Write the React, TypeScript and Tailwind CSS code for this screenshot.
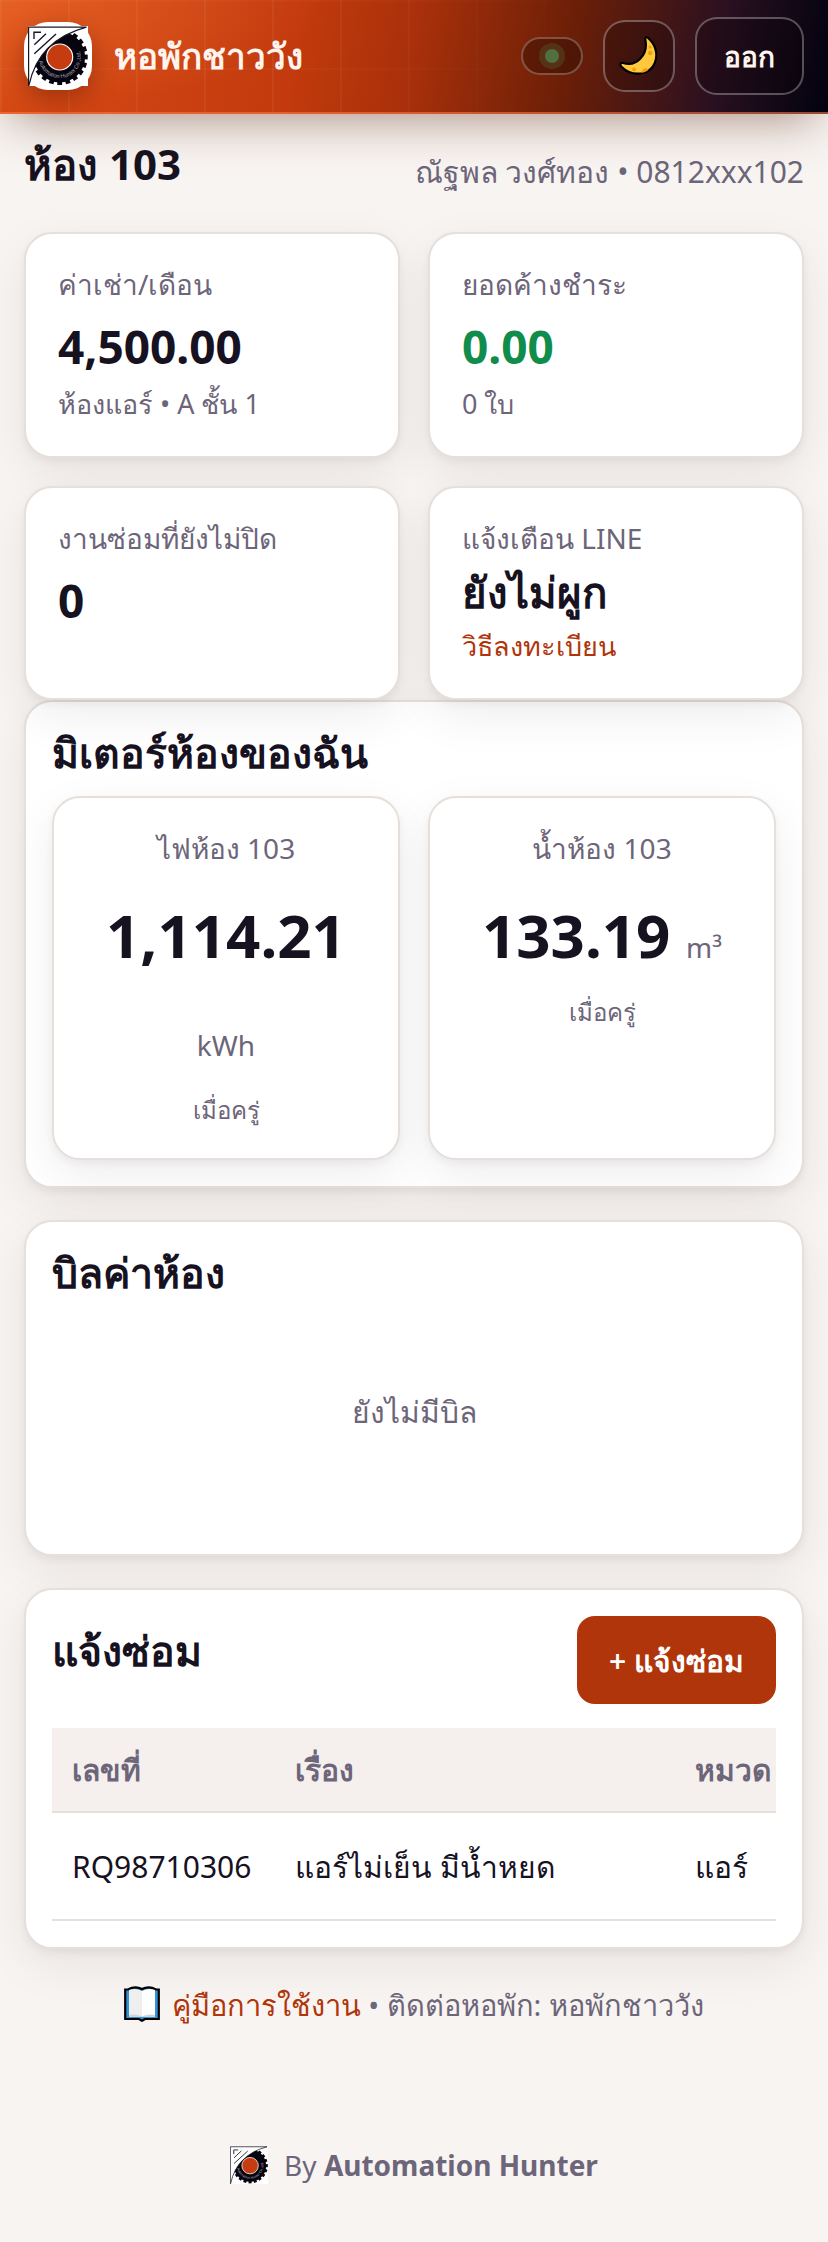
import React from "react";

const stats = [
  { label: "ค่าเช่า/เดือน", value: "4,500.00", note: "ห้องแอร์ • A ชั้น 1" },
  { label: "ยอดค้างชำระ", value: "0.00", note: "0 ใบ", positive: true },
  { label: "งานซ่อมที่ยังไม่ปิด", value: "0" },
];

const meters = [
  { label: "ไฟห้อง 103", value: "1,114.21", unit: "kWh", time: "เมื่อครู่" },
  { label: "น้ำห้อง 103", value: "133.19", unit: "m³", time: "เมื่อครู่" },
];

const tickets = [{ id: "RQ98710306", title: "แอร์ไม่เย็น มีน้ำหยด", category: "แอร์" }];

const teeth = Array.from({ length: 20 }, (_, i) => i * 18);

const cardClass =
  "rounded-[28px] border-2 border-[#e6dfda] bg-white shadow-[0_4px_8px_rgba(23,18,31,0.05),0_16px_48px_rgba(23,18,31,0.07)]";

function Logo({ id, className }: { id: string; className: string }) {
  return (
    <svg viewBox="0 0 60 60" className={className} aria-hidden="true">
      <defs>
        <clipPath id={`${id}-gear`}>
          <path d="M58 1.3Q10.5 14 1 59.3V60H60V0Z" />
        </clipPath>
        <path id={`${id}-ring`} d="M10.7 31A21 21 0 0 0 52.7 31A21 21 0 0 0 31.7 10" />
      </defs>
      <rect width="60" height="60" fill="#fff" />
      <g clipPath={`url(#${id}-gear)`} fill="#06040f">
        <circle cx="31.7" cy="31" r="25.4" />
        {teeth.map((angle) => (
          <rect key={angle} x="29.3" y="3" width="4.8" height="6" transform={`rotate(${angle} 31.7 31)`} />
        ))}
      </g>
      <circle cx="31.7" cy="31" r="13" fill="#c43c0f" stroke="#fff" strokeWidth="1.2" />
      <text fill="#a9a6b3" fontSize="5.6" fontFamily="Liberation Sans, sans-serif">
        <textPath href={`#${id}-ring`} startOffset="4">
          Automation Hunter Co.,Ltd.
        </textPath>
      </text>
      <g fill="none" stroke="#1a1826" strokeWidth="1.2">
        <path d="M.6 60V1.2H58.5Q10.5 14 1 59.3" />
        <path d="M6 13V6.2H13M6.3 18.7L18 7.7M6.3 27.7L28 8" strokeWidth="1.4" />
      </g>
    </svg>
  );
}

function MoonIcon() {
  return (
    <svg viewBox="0 0 40 40" className="size-10" aria-hidden="true">
      <path
        d="M28.8 1.6C36.5 8 39.4 18.5 35.7 27.2C31 38.7 13.5 42 2.2 30.5C.2 28 2 26.3 4.2 27C17.5 31.3 29.5 18.5 26.3 4C26 1.3 27.5 .6 28.8 1.6Z"
        fill="#ffc83d"
        stroke="#000"
        strokeWidth="2.2"
      />
      <g fill="#f0a00c">
        <circle cx="31.2" cy="17" r="2.3" />
        <circle cx="31" cy="11" r="1.5" />
        <circle cx="15" cy="33.5" r="2" />
        <path d="M22.3 37C23 31.5 28 31 29.5 34Q26 36.5 22.3 37Z" />
      </g>
    </svg>
  );
}

function BookIcon() {
  return (
    <svg viewBox="0 0 36 36" className="mr-1 inline-block size-9 align-[-6px]" aria-hidden="true">
      <path d="M1.2 3.5H4Q11-.5 18 3Q25-.5 32 3.5H34.8V33H21L18 34.8L15 33H1.2Z" fill="#3391d6" stroke="#000" strokeWidth="2.2" />
      <path d="M5 4Q12 1.5 18 5V31Q12 28 5 30Z" fill="#efefef" />
      <path d="M31 4Q24 1.5 18 5V31Q24 28 31 30Z" fill="#fff" />
      <path d="M5 29Q12 27.5 18 30.5Q24 27.5 31 29V31H5Z" fill="#d5d5d5" />
    </svg>
  );
}

function Header() {
  return (
    <header className="relative z-20 flex items-center gap-[22px] border-b-2 border-[#ff7846]/60 bg-[radial-gradient(ellipse_320px_110px_at_0%_0%,rgba(255,130,60,0.4),transparent),linear-gradient(100deg,#d64a14_0%,#c93f10_26%,#c23a0d_36%,#a8300a_50%,#6c1f07_68%,#2a1020_86%,#02020f_100%)] bg-origin-border px-6 py-[17px] shadow-[0_16px_48px_-12px_rgba(90,40,20,0.5)]">
      <div className="pointer-events-none absolute inset-0 bg-[linear-gradient(to_right,rgba(255,255,255,0.05)_2px,transparent_2px),linear-gradient(to_bottom,rgba(255,255,255,0.03)_2px,transparent_2px)] bg-[size:68px_68px] [mask-image:linear-gradient(110deg,#000_0%,#000_35%,transparent_70%)]" />
      <div className="relative flex size-[68px] items-center justify-center rounded-3xl bg-white shadow-[0_8px_24px_rgba(60,10,0,0.35)]">
        <Logo id="brand" className="size-[60px]" />
      </div>
      <h1 className="relative grow text-[35px] leading-[48px] font-bold text-[#fff4ee]">หอพักชาววัง</h1>
      <div className="relative flex items-center gap-5">
        <span className="flex h-[38px] w-[62px] items-center justify-center rounded-full border-2 border-white/25 bg-black/25">
          <span className="size-3.5 rounded-full bg-[#52703f] ring-6 ring-[#52703f]/30" />
        </span>
        <button type="button" aria-label="🌙" className="flex size-[72px] items-center justify-center rounded-[22px] border-2 border-white/30 bg-black/20">
          <MoonIcon />
        </button>
        <button type="button" className="h-[78px] rounded-[22px] border-2 border-white/30 bg-black/20 px-[27px] text-[28px] font-semibold text-[#fff4ee]">
          ออก
        </button>
      </div>
    </header>
  );
}

function StatGrid() {
  return (
    <section className="relative z-10 grid grid-cols-2 gap-7">
      {stats.map((stat) => (
        <div key={stat.label} className={`${cardClass} px-8 py-7`}>
          <p className="text-[28px] leading-[44px] text-[#6d6579]">{stat.label}</p>
          <p className={`mt-1.5 text-[46px] leading-[68px] font-bold ${stat.positive ? "text-[#108c4c]" : ""}`}>{stat.value}</p>
          {stat.note && <p className="text-[27px] leading-[48px] text-[#6d6579]">{stat.note}</p>}
        </div>
      ))}
      <div className={`${cardClass} px-8 py-7`}>
        <p className="text-[28px] leading-[44px] text-[#6d6579]">แจ้งเตือน LINE</p>
        <p className="mt-1.5 text-[42px] leading-[52px] font-bold">ยังไม่ผูก</p>
        <a href="#line" className="mt-1 block text-[27px] leading-[48px] text-[#b0350a]">
          วิธีลงทะเบียน
        </a>
      </div>
    </section>
  );
}

function MeterSection() {
  return (
    <section className={`${cardClass} p-[26px]`}>
      <h2 className="text-[41px] leading-[48px] font-bold">มิเตอร์ห้องของฉัน</h2>
      <div className="mt-5 grid grid-cols-2 gap-7">
        {meters.map((meter) => (
          <div key={meter.label} className={`${cardClass} px-8 py-7 text-center`}>
            <p className="text-[28px] leading-[44px] text-[#6d6579]">{meter.label}</p>
            <p className="mt-4 text-[60px] leading-[98px] font-bold">
              {meter.value} <span className="text-[28px] leading-none font-normal text-[#6d6579]">{meter.unit}</span>
            </p>
            <p className="mt-2 text-[24px] leading-[40px] text-[#6d6579]">{meter.time}</p>
          </div>
        ))}
      </div>
    </section>
  );
}

function RepairSection() {
  return (
    <section className={`${cardClass} mt-8 p-[26px]`}>
      <div className="flex items-start justify-between">
        <h2 className="mt-2.5 text-[41px] leading-[48px] font-bold">แจ้งซ่อม</h2>
        <button type="button" className="h-[88px] rounded-[18px] bg-[#b0350a] px-8 text-[30px] font-semibold text-white">
          + แจ้งซ่อม
        </button>
      </div>
      <div className="mt-6 overflow-hidden">
        <table className="w-full min-w-[820px] table-fixed text-left text-[30px] whitespace-nowrap">
          <thead className="bg-[#f5f0ed] text-[#6d6579]">
            <tr className="h-[84px] border-b-2 border-[#e6dfda]">
              <th className="w-[223px] px-5 font-bold">เลขที่</th>
              <th className="w-[400px] px-5 font-bold">เรื่อง</th>
              <th className="px-5 font-bold">หมวด</th>
            </tr>
          </thead>
          <tbody>
            {tickets.map((ticket) => (
              <tr key={ticket.id} className="h-[108px] border-b-2 border-[#e6dfda]">
                <td className="px-5">{ticket.id}</td>
                <td className="px-5">{ticket.title}</td>
                <td className="px-5">{ticket.category}</td>
              </tr>
            ))}
          </tbody>
        </table>
      </div>
    </section>
  );
}

export default function App() {
  return (
    <div className="min-h-screen bg-[#f8f4f1] font-['Noto_Sans',sans-serif] text-[#17121f]">
      <Header />
      <main className="px-6 pt-6">
        <div className="mb-9 flex items-start justify-between">
          <h2 className="text-[42px] leading-[52px] font-bold">ห้อง 103</h2>
          <p className="mt-2.5 text-[30px] leading-[48px] text-[#6d6579]">ณัฐพล วงศ์ทอง • 0812xxx102</p>
        </div>
        <StatGrid />
        <MeterSection />
        <section className={`${cardClass} mt-8 p-[26px]`}>
          <h2 className="text-[41px] leading-[48px] font-bold">บิลค่าห้อง</h2>
          <p className="py-[92px] text-center text-[30px] leading-[48px] text-[#6d6579]">ยังไม่มีบิล</p>
        </section>
        <RepairSection />
      </main>
      <footer className="pt-8 pb-8 text-center text-[28px] leading-[48px] text-[#6d6579]">
        <p className="text-[29px]">
          <BookIcon />{" "}
          <a href="#manual" className="text-[#b0350a]">
            คู่มือการใช้งาน
          </a>{" "}
          • ติดต่อหอพัก: หอพักชาววัง
        </p>
        <p className="mt-28 flex items-center justify-center gap-4">
          <Logo id="credit" className="size-[38px]" />
          <span>
            By <b>Automation Hunter</b>
          </span>
        </p>
      </footer>
    </div>
  );
}
